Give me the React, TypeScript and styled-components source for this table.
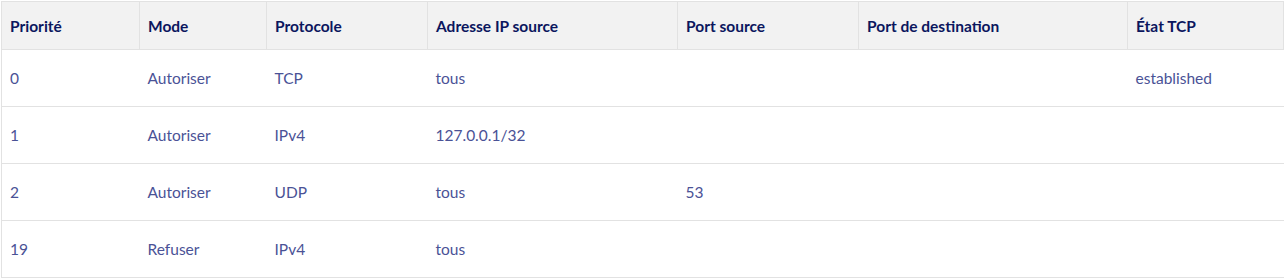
import styled, { createGlobalStyle } from "styled-components";

const GlobalStyle = createGlobalStyle`
  body {
    margin: 0;
    background: #ffffff;
    font-family: 'Lato', 'Liberation Sans', sans-serif;
  }
`;

const Wrapper = styled.div`
  padding: 1px 1px 0 1px;
`;

const Table = styled.table`
  width: 1282px;
  border-collapse: collapse;
  table-layout: fixed;
  border-left: 1px solid #e2e2e2;
  border-top: 1px solid #e2e2e2;
  font-size: 15.5px;
`;

const HeadCell = styled.th`
  height: 47px;
  padding: 0 9px 0 8px;
  text-align: left;
  font-weight: 700;
  color: #0b165e;
  background-color: #f2f2f2;
  border-right: 1px solid #e2e2e2;
  border-bottom: 1px solid #e2e2e2;
  white-space: nowrap;
`;

const BodyRow = styled.tr`
  border-bottom: 1px solid #e2e2e2;
`;

const BodyCell = styled.td`
  height: 56px;
  padding: 0 9px 0 8px;
  color: #4a5296;
  white-space: nowrap;
`;

interface Rule {
  priority: number;
  mode: string;
  protocol: string;
  source: string;
  sourcePort?: string;
  destPort?: string;
  tcpState?: string;
}

const columns = [
  { label: "Priorité", width: 138 },
  { label: "Mode", width: 127 },
  { label: "Protocole", width: 161 },
  { label: "Adresse IP source", width: 250 },
  { label: "Port source", width: 181 },
  { label: "Port de destination", width: 269 },
  { label: "État TCP", width: 156 },
];

const rules: Rule[] = [
  { priority: 0, mode: "Autoriser", protocol: "TCP", source: "tous", tcpState: "established" },
  { priority: 1, mode: "Autoriser", protocol: "IPv4", source: "127.0.0.1/32" },
  { priority: 2, mode: "Autoriser", protocol: "UDP", source: "tous", sourcePort: "53" },
  { priority: 19, mode: "Refuser", protocol: "IPv4", source: "tous" },
];

export default function App() {
  return (
    <>
      <GlobalStyle />
      <Wrapper>
        <Table>
          <colgroup>
            {columns.map((c) => (
              <col key={c.label} style={{ width: c.width }} />
            ))}
          </colgroup>
          <thead>
            <tr>
              {columns.map((c) => (
                <HeadCell key={c.label}>{c.label}</HeadCell>
              ))}
            </tr>
          </thead>
          <tbody>
            {rules.map((r) => (
              <BodyRow key={r.priority}>
                <BodyCell>{r.priority}</BodyCell>
                <BodyCell>{r.mode}</BodyCell>
                <BodyCell>{r.protocol}</BodyCell>
                <BodyCell>{r.source}</BodyCell>
                <BodyCell>{r.sourcePort}</BodyCell>
                <BodyCell>{r.destPort}</BodyCell>
                <BodyCell>{r.tcpState}</BodyCell>
              </BodyRow>
            ))}
          </tbody>
        </Table>
      </Wrapper>
    </>
  );
}
